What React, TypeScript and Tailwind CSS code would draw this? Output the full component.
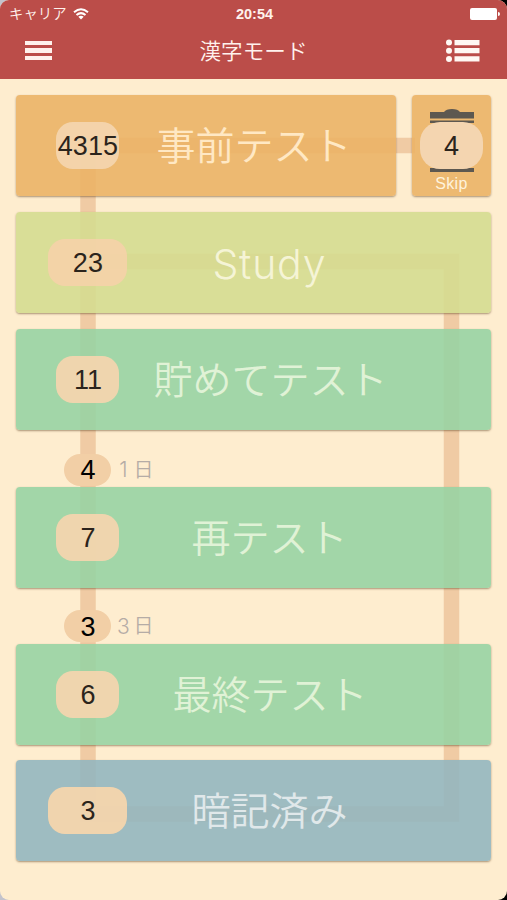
import React from "react";

const jp = "font-['Liberation_Sans','Noto_Sans_CJK_JP',sans-serif]";
const labelFont = "font-['Noto_Sans_CJK_JP',sans-serif] font-[350]";

type CardProps = {
  count: string;
  label: string;
  tone: string;
  badge: string;
  offset: string;
  className?: string;
  font?: string;
};

function Card({ count, label, tone, badge, offset, className = "", font = `pb-1 text-[39px] ${labelFont}` }: CardProps) {
  return (
    <div
      className={`flex h-[101px] items-center rounded-[4px] shadow-[0_1px_2px_rgba(90,60,30,0.5)] ${tone} ${className}`}
    >
      <div className="flex w-[143px] shrink-0 justify-center">
        <span
          className={`flex h-[47px] items-center justify-center rounded-[17px] pt-[2px] text-[27px] leading-none text-[#2b241c] ${badge}`}
        >
          {count}
        </span>
      </div>
      <span className={`whitespace-nowrap leading-none ${font} ${offset}`}>{label}</span>
    </div>
  );
}

function Interval({ count, days, className }: { count: string; days: string; className: string }) {
  return (
    <div className={`flex h-8 items-center pl-12 ${className}`}>
      <span className="flex h-8 w-[47px] items-center justify-center rounded-full bg-[#f2cfa6] pt-[2px] text-[27px] leading-none text-black">
        {count}
      </span>
      <span className="ml-[3px] flex items-center gap-[1px] text-[20px] leading-none text-[#b5aca6]">
        <span className="w-[18px] text-center font-['Inter',sans-serif] text-[21px] font-light leading-none">{days}</span>
        <span className={`pb-[2px] ${labelFont}`}>日</span>
      </span>
    </div>
  );
}

function Connectors() {
  return (
    <svg className="absolute left-0 top-0" width="507" height="821" viewBox="0 0 507 821" fill="none">
      <path d="M415 66.500H88V735H451.500V182.500H88" stroke="#f0cba4" strokeWidth="15.500" />
    </svg>
  );
}

function Header() {
  return (
    <header className="flex h-[79px] flex-col bg-[#bb4d49] text-[#fff2ed]">
      <div className="grid h-[27px] grid-cols-3 items-center pl-[9px] pr-[7px]">
        <div className="flex items-center gap-[6px]">
          <span className="font-['Noto_Sans_CJK_JP',sans-serif] text-[14.400px] font-[350] leading-none">キャリア</span>
          <svg width="16" height="12" viewBox="0 0 16 12" fill="none" stroke="#fff" strokeWidth="2">
            <path d="M1 4.300Q8-1.700 15 4.300M3.500 7Q8 3.200 12.500 7" />
            <path d="M8 11.500L5.300 8.700Q8 6.800 10.700 8.700Z" fill="#fff" stroke="none" />
          </svg>
        </div>
        <span className="pt-[1px] text-center text-[14.500px] font-bold leading-none">20:54</span>
        <div className="flex items-center justify-end gap-[1px]">
          <span className="h-[12px] w-[27px] rounded-[2px] bg-white" />
          <span className="h-1 w-[2px] rounded-r-full bg-white" />
        </div>
      </div>
      <div className="grid h-[47px] grid-cols-3 items-center pl-[25px] pr-[27px]">
        <div className="flex w-[27px] flex-col gap-[3px]">
          <span className="h-[4.500px] bg-[#fff2ed]" />
          <span className="h-[4.500px] bg-[#fff2ed]" />
          <span className="h-[4.500px] bg-[#fff2ed]" />
        </div>
        <h1 className="whitespace-nowrap pb-[2px] pl-[2px] text-center font-['Noto_Sans_CJK_JP',sans-serif] text-[21.600px] font-[350] leading-none">
          漢字モード
        </h1>
        <svg className="justify-self-end" width="34" height="24" viewBox="0 0 34 24" fill="#fff8f3">
          <circle cx="3" cy="3.500" r="3" />
          <circle cx="3" cy="11.700" r="3" />
          <circle cx="3" cy="20" r="3" />
          <path d="M8.500 1H33.500V6.300H8.500zM8.500 9H33.500V14.300H8.500zM8.500 17.300H33.500V22.600H8.500z" />
        </svg>
      </div>
    </header>
  );
}

function SkipCard() {
  return (
    <div className="flex h-[101px] w-[79px] flex-col items-center rounded-[4px] bg-[#ebb266]/90 pt-[14px] shadow-[0_1px_2px_rgba(90,60,30,0.5)]">
      <div className="relative flex h-[64px] w-[63px] justify-center">
        <svg width="44" height="64" viewBox="0 0 44 64" fill="#5d5850">
          <path d="M0 3H14Q16 0 22 0Q28 0 30 3H44V9.500H0zM0 11.500H44V14H0zM0 59H44V63H0z" />
        </svg>
        <span className="absolute left-0 top-[13px] flex h-[47px] w-[63px] items-center justify-center rounded-[20px] bg-[#f4d5b0] pt-[2px] text-[27px] leading-none text-[#2b241c]">
          4
        </span>
      </div>
      <span className="mt-[3px] text-[16px] leading-none tracking-[0.3px] text-[#fff3dc]">Skip</span>
    </div>
  );
}

export default function App() {
  return (
    <div className="h-[900px] w-[507px] bg-[linear-gradient(90deg,#c3c3cc_50%,#000_50%)]">
      <div className={`flex h-full flex-col overflow-hidden rounded-[9px] bg-[#feedcf] ${jp}`}>
        <Header />
        <main className="relative flex-1">
          <Connectors />
          <div className="relative flex flex-col pl-[16.400px] pr-4 pt-4">
            <div className="flex justify-between">
              <Card count="4315" label="事前テスト" tone="bg-[#ebb266]/90 text-[#ffe8c4]" badge="w-[63px] bg-[#f4d6b0]/90" offset="ml-[-3px]" className="w-[380px]" />
              <SkipCard />
            </div>
            <Card count="23" label="Study" tone="bg-[#d5dc90]/90 text-[#f5f4d6]" badge="w-[79px] bg-[#f5d1a8]/90" offset="ml-[53px]" className="mt-4" font="pt-[3px] text-[41px] tracking-[0.8px] font-light font-['Inter',sans-serif]" />
            <Card count="11" label="貯めてテスト" tone="bg-[#98d3a3]/90 text-[#e0f2d6]" badge="w-[63px] bg-[#f7d5ae]/90" offset="ml-[-6px]" className="mt-4" />
            <Interval count="4" days="1" className="mt-[23.500px]" />
            <Card count="7" label="再テスト" tone="bg-[#98d3a3]/90 text-[#e0f2d6]" badge="w-[63px] bg-[#f7d5ae]/90" offset="ml-[32px]" className="mt-[1.500px]" />
            <Interval count="3" days="3" className="mt-[22px]" />
            <Card count="6" label="最終テスト" tone="bg-[#98d3a3]/90 text-[#e0f2d6]" badge="w-[63px] bg-[#f7d5ae]/90" offset="ml-[13px]" className="mt-[1.500px]" />
            <Card count="3" label="暗記済み" tone="bg-[#93b6bf]/90 text-[#e0e8ea]" badge="w-[79px] bg-[#f8d6ac]/90" offset="ml-[32px]" className="mt-[15.500px]" />
          </div>
        </main>
      </div>
    </div>
  );
}
